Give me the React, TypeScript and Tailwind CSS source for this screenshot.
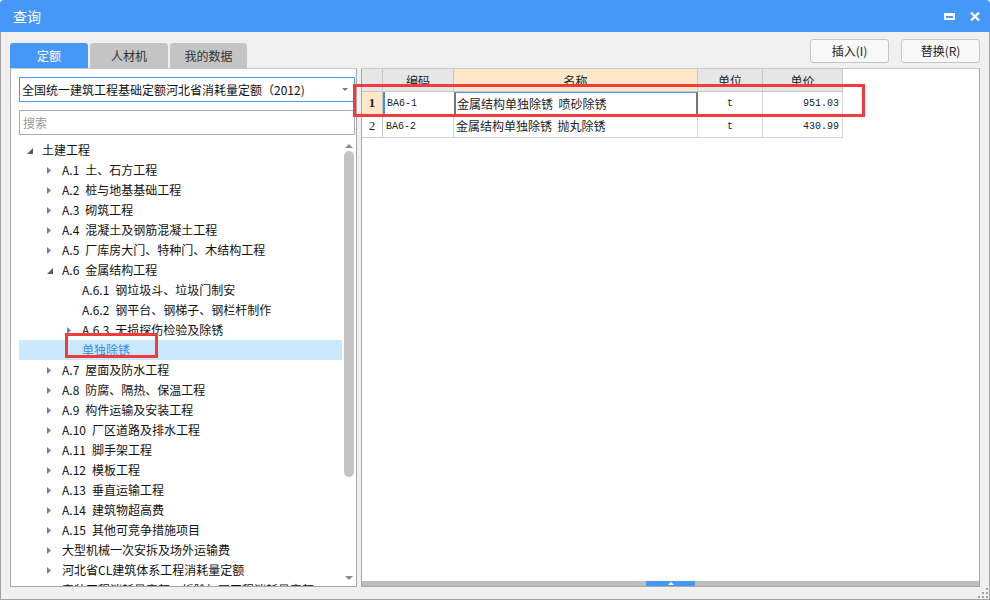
import React from "react";

type Node = { l: number; t: string; s: "open" | "closed" | "leaf"; sel?: boolean };

const tree: Node[] = [
  { l: 0, t: "土建工程", s: "open" },
  { l: 1, t: "A.1\u2002土、石方工程", s: "closed" },
  { l: 1, t: "A.2\u2002桩与地基基础工程", s: "closed" },
  { l: 1, t: "A.3\u2002砌筑工程", s: "closed" },
  { l: 1, t: "A.4\u2002混凝土及钢筋混凝土工程", s: "closed" },
  { l: 1, t: "A.5\u2002厂库房大门、特种门、木结构工程", s: "closed" },
  { l: 1, t: "A.6\u2002金属结构工程", s: "open" },
  { l: 2, t: "A.6.1\u2002钢垃圾斗、垃圾门制安", s: "leaf" },
  { l: 2, t: "A.6.2\u2002钢平台、钢梯子、钢栏杆制作", s: "leaf" },
  { l: 2, t: "A.6.3\u2002无损探伤检验及除锈", s: "closed" },
  { l: 2, t: "单独除锈", s: "leaf", sel: true },
  { l: 1, t: "A.7\u2002屋面及防水工程", s: "closed" },
  { l: 1, t: "A.8\u2002防腐、隔热、保温工程", s: "closed" },
  { l: 1, t: "A.9\u2002构件运输及安装工程", s: "closed" },
  { l: 1, t: "A.10\u2002厂区道路及排水工程", s: "closed" },
  { l: 1, t: "A.11\u2002脚手架工程", s: "closed" },
  { l: 1, t: "A.12\u2002模板工程", s: "closed" },
  { l: 1, t: "A.13\u2002垂直运输工程", s: "closed" },
  { l: 1, t: "A.14\u2002建筑物超高费", s: "closed" },
  { l: 1, t: "A.15\u2002其他可竞争措施项目", s: "closed" },
  { l: 1, t: "大型机械一次安拆及场外运输费", s: "closed" },
  { l: 1, t: "河北省CL建筑体系工程消耗量定额", s: "closed" },
  { l: 1, t: "安装工程消耗量定额、拆除加固工程消耗量定额", s: "closed" },
];

function Tri({ s }: { s: Node["s"] }) {
  if (s === "open")
    return (
      <svg width="6" height="6" viewBox="0 0 6 6" className="mt-[1px]">
        <polygon points="6,0 6,6 0,6" fill="#5a5a5a" />
      </svg>
    );
  if (s === "closed")
    return (
      <svg width="4" height="7" viewBox="0 0 4 7">
        <polygon points="0,0 4,3.5 0,7" fill="#808080" />
      </svg>
    );
  return null;
}

const padClass = ["pl-[8px]", "pl-[28px]", "pl-[48px]"];

export default function App() {
  return (
    <div className="relative w-[990px] h-[600px] flex flex-col rounded-t-[4px] overflow-hidden bg-[#f0f0f0] font-['Noto_Sans_CJK_SC',sans-serif] text-[12px] text-[#111]">
      {/* Title bar */}
      <div className="h-[32px] shrink-0 bg-[#4598f8] flex items-center pl-[13px] pr-[10px] text-white">
        <span className="text-[14px] leading-none">查询</span>
        <div className="ml-auto flex items-center gap-[15px]">
          <div className="w-[11px] h-[7px] border-[2px] border-t-[3px] border-white" />
          <svg width="10" height="9" viewBox="0 0 10 9">
            <path d="M1 0.5 L9 8.5 M9 0.5 L1 8.5" stroke="white" strokeWidth="2.2" />
          </svg>
        </div>
      </div>

      {/* Body */}
      <div className="flex-1 min-h-0 flex flex-col border-x border-b border-[#a3a3a3] px-[9px] pt-[7px] pb-[12px]">
        {/* Tabs + buttons */}
        <div className="h-[29px] shrink-0 flex">
          <div className="flex items-end gap-[2px]">
            <div className="w-[78px] h-[25px] rounded-t-[3px] bg-[#4598f8] text-white flex items-center justify-center">定额</div>
            <div className="w-[78px] h-[25px] rounded-t-[3px] bg-[#c4c4c4] text-[#333] flex items-center justify-center">人材机</div>
            <div className="w-[77px] h-[25px] rounded-t-[3px] bg-[#c4c4c4] text-[#333] flex items-center justify-center">我的数据</div>
          </div>
          <div className="ml-auto flex items-start gap-[12px]">
            <button className="w-[79px] h-[24px] rounded-[3px] border border-[#c6c6c6] bg-[#f8f8f8] text-[#222] flex items-center justify-center">插入(I)</button>
            <button className="w-[79px] h-[24px] rounded-[3px] border border-[#c6c6c6] bg-[#f8f8f8] text-[#222] flex items-center justify-center">替换(R)</button>
          </div>
        </div>

        {/* Panels */}
        <div className="flex-1 flex gap-[4px] min-h-0">
          {/* Left panel */}
          <div className="w-[347px] shrink-0 min-h-0 flex flex-col bg-white border border-[#a8a8a8] border-t-[#c8c8c8] pl-[8px] pr-[1px] pt-[8px]">
            <div className="h-[25px] shrink-0 border border-[#4a97f3] flex items-center pl-[2px] pr-[6px]">
              <span className="whitespace-nowrap">全国统一建筑工程基础定额河北省消耗量定额（2012)</span>
              <svg width="6" height="3" viewBox="0 0 6 3" className="ml-auto">
                <polygon points="0,0 6,0 3,3" fill="#7a7a7a" />
              </svg>
            </div>
            <div className="mt-[8px] h-[25px] shrink-0 border border-[#ababab] flex items-center pl-[3px] text-[#9a9a9a]">搜索</div>
            <div className="mt-[5px] flex-1 flex min-h-0 overflow-hidden">
              <div className="flex-1 flex flex-col overflow-hidden">
                {tree.map((n, i) => (
                  <div
                    key={i}
                    className={`h-[20px] shrink-0 flex items-center ${padClass[n.l]} ${n.sel ? "bg-[#cce8ff] text-[#3a8ce6]" : ""}`}
                  >
                    <div className="w-[15px] shrink-0 flex items-center">
                      <Tri s={n.s} />
                    </div>
                    <span className="whitespace-nowrap leading-[20px]">{n.t}</span>
                  </div>
                ))}
              </div>
              {/* Scrollbar */}
              <div className="w-[13px] shrink-0 flex flex-col items-center">
                <div className="h-[10px] shrink-0 flex items-center justify-center pt-[2px]">
                  <svg width="8" height="4" viewBox="0 0 8 4">
                    <polygon points="0,4 8,4 4,0" fill="#8c8c8c" />
                  </svg>
                </div>
                <div className="mt-[1px] w-[10px] h-[326px] shrink-0 rounded-full bg-[#c4c4c4]" />
                <div className="flex-1" />
                <div className="h-[10px] shrink-0 flex items-start justify-center pb-[2px]">
                  <svg width="8" height="4" viewBox="0 0 8 4">
                    <polygon points="0,0 8,0 4,4" fill="#8c8c8c" />
                  </svg>
                </div>
              </div>
            </div>
          </div>

          {/* Right panel */}
          <div className="flex-1 min-h-0 flex flex-col bg-white border border-[#a8a8a8] border-t-[#c8c8c8]">
            <div className="w-[482px] grid grid-cols-[21px_71px_244px_65px_80px] text-[#222]">
              {/* header */}
              <div className="h-[23px] bg-[#e6e6e6] border-r border-b border-[#c8c8c8]" />
              <div className="h-[23px] bg-[#e6e6e6] border-r border-b border-[#c8c8c8] flex items-center justify-center pt-[2px]">编码</div>
              <div className="h-[23px] bg-[#fde7c8] border-r border-b border-[#c8c8c8] flex items-center justify-center pt-[2px]">名称</div>
              <div className="h-[23px] bg-[#e6e6e6] border-r border-b border-[#c8c8c8] flex items-center justify-center pt-[2px]">单位</div>
              <div className="h-[23px] bg-[#e6e6e6] border-r border-b border-[#c8c8c8] flex items-center justify-center pt-[2px]">单价</div>
              {/* row 1 */}
              <div className="h-[23px] bg-[#fde7c8] border-r border-b border-[#c8c8c8] flex items-center justify-center font-['Liberation_Serif',serif] font-bold text-[13px]">1</div>
              <div className="h-[23px] border-b border-[#d4d4d4] border-l-[2px] border-l-[#3d8ef5] flex items-center pl-[2px] font-['Liberation_Mono',monospace] text-[10px]">BA6-1</div>
              <div className="h-[23px] border-t border-t-[#4a97f3] border-b border-b-[#d4d4d4] border-x-[2px] border-x-[#767676] flex items-center pl-[1px]">金属结构单独除锈&nbsp;&nbsp;喷砂除锈</div>
              <div className="h-[23px] border-r border-b border-[#d4d4d4] flex items-center justify-center font-['Liberation_Mono',monospace] text-[10px]">t</div>
              <div className="h-[23px] border-r border-b border-[#d4d4d4] flex items-center justify-end pr-[3px] font-['Liberation_Mono',monospace] text-[10px]">951.03</div>
              {/* row 2 */}
              <div className="h-[23px] border-r border-b border-[#c8c8c8] flex items-center justify-center font-['Liberation_Serif',serif] text-[13px]">2</div>
              <div className="h-[23px] border-r border-b border-[#d4d4d4] flex items-center pl-[3px] font-['Liberation_Mono',monospace] text-[10px]">BA6-2</div>
              <div className="h-[23px] border-r border-b border-[#d4d4d4] flex items-center pl-[2px]">金属结构单独除锈&nbsp;&nbsp;抛丸除锈</div>
              <div className="h-[23px] border-r border-b border-[#d4d4d4] flex items-center justify-center font-['Liberation_Mono',monospace] text-[10px]">t</div>
              <div className="h-[23px] border-r border-b border-[#d4d4d4] flex items-center justify-end pr-[3px] font-['Liberation_Mono',monospace] text-[10px]">430.99</div>
            </div>
            <div className="flex-1" />
            <div className="h-[5px] shrink-0 bg-[#bdbdbd] flex">
              <div className="ml-[284px] w-[49px] h-[5px] bg-[#4598f8] flex items-center justify-center">
                <svg width="6" height="3" viewBox="0 0 6 3">
                  <polygon points="0,3 6,3 3,0" fill="white" />
                </svg>
              </div>
            </div>
          </div>
        </div>
      </div>

      {/* Resize grip */}
      <div className="absolute right-[2px] bottom-[2px] grid grid-cols-3 gap-[2px]">
        <div className="w-[2px] h-[2px]" />
        <div className="w-[2px] h-[2px]" />
        <div className="w-[2px] h-[2px] bg-[#a0a0a0]" />
        <div className="w-[2px] h-[2px]" />
        <div className="w-[2px] h-[2px] bg-[#a0a0a0]" />
        <div className="w-[2px] h-[2px] bg-[#a0a0a0]" />
        <div className="w-[2px] h-[2px] bg-[#a0a0a0]" />
        <div className="w-[2px] h-[2px] bg-[#a0a0a0]" />
        <div className="w-[2px] h-[2px] bg-[#a0a0a0]" />
      </div>

      {/* Red annotation boxes */}
      <div className="absolute left-[65px] top-[333px] w-[93px] h-[25px] border-[3px] border-[#f23b3b]" />
      <div className="absolute left-[353px] top-[84px] w-[512px] h-[33px] border-[3px] border-[#f23b3b]" />
    </div>
  );
}
